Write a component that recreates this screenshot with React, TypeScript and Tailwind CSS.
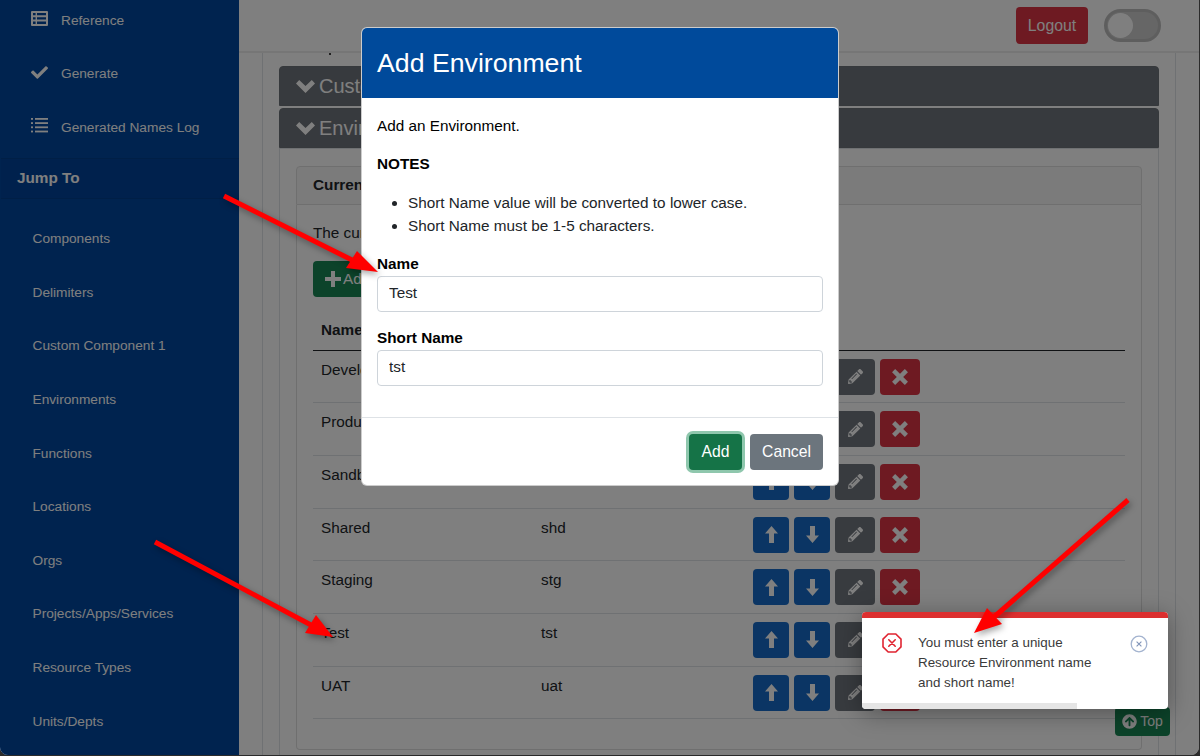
import React from "react";
import { FaCheck, FaPencilAlt, FaArrowCircleUp } from "react-icons/fa";

const jump = ["Components","Delimiters","Custom Component 1","Environments","Functions","Locations","Orgs","Projects/Apps/Services","Resource Types","Units/Depts"];
const rows: [string,string][] = [["Development","dev"],["Production","prd"],["Sandbox","sbx"],["Shared","shd"],["Staging","stg"],["Test","tst"],["UAT","uat"]];

function TableIcon() {
  return (
    <svg width="17" height="15" viewBox="0 0 17 15" fill="currentColor">
      <path fillRule="evenodd" d="M1 0H16A1 1 0 0 1 17 1V14A1 1 0 0 1 16 15H1A1 1 0 0 1 0 14V1A1 1 0 0 1 1 0ZM2 2V4.2H4.6V2ZM6 2V4.2H15V2ZM2 6.2V8.6H4.6V6.2ZM6 6.2V8.6H15V6.2ZM2 10.6V13H4.6V10.6ZM6 10.6V13H15V10.6Z" />
    </svg>
  );
}

function ListIcon() {
  return (
    <svg width="17" height="15" viewBox="0 0 17 15" fill="currentColor">
      <rect x="0" y="0" width="2" height="1.8" /><rect x="4" y="0" width="13" height="1.8" />
      <rect x="0" y="4.2" width="2" height="1.8" /><rect x="4" y="4.2" width="13" height="1.8" />
      <rect x="0" y="8.4" width="2" height="1.8" /><rect x="4" y="8.4" width="13" height="1.8" />
      <rect x="0" y="12.6" width="2" height="1.8" /><rect x="4" y="12.6" width="13" height="1.8" />
    </svg>
  );
}

function Chevron() {
  return (
    <svg width="19" height="14" viewBox="0 0 19 14" fill="currentColor">
      <polygon points="0,4.6 3.2,1 9.5,7 15.8,1 19,4.6 9.5,14" />
    </svg>
  );
}

function ArrowUp() {
  return (
    <svg width="13" height="17" viewBox="0 0 13 17" fill="currentColor">
      <polygon points="6.5,0 13,7.4 9,7.4 9,17 4,17 4,7.4 0,7.4" />
    </svg>
  );
}

function ArrowDown() {
  return (
    <svg width="13" height="17" viewBox="0 0 13 17" fill="currentColor">
      <polygon points="6.5,17 13,9.6 9,9.6 9,0 4,0 4,9.6 0,9.6" />
    </svg>
  );
}

function Cross() {
  return (
    <svg width="16" height="16" viewBox="0 0 16 16" fill="none" stroke="currentColor" strokeWidth="4.4">
      <path d="M1.6 1.6 14.4 14.4M14.4 1.6 1.6 14.4" />
    </svg>
  );
}

function Plus() {
  return (
    <svg width="16" height="16" viewBox="0 0 16 16" fill="currentColor">
      <polygon points="6,0 10,0 10,6 16,6 16,10 10,10 10,16 6,16 6,10 0,10 0,6 6,6" />
    </svg>
  );
}

function NavTop({ icon, label }: { icon: React.ReactNode; label: string }) {
  return (
    <div className="h-[53.6px] flex items-center pl-[31px] text-white text-[13.7px]">
      <span className="w-[30px] text-[17px] -mt-1 flex">{icon}</span>
      <span>{label}</span>
    </div>
  );
}

function Bar({ label, top }: { label: string; top?: boolean }) {
  return (
    <div className={`h-[40px] bg-[#6f757c] border border-[#6c7278] rounded-t-[4px] text-white text-[20px] flex items-center pl-[16px] gap-[4px] ${top ? "mb-[2px]" : ""}`}>
      <Chevron />
      <span>{label}</span>
    </div>
  );
}

export default function App() {
  return (
    <div className="w-[1200px] h-[756px] overflow-hidden bg-[#2b2b2b]">
      <div className="relative w-[1199px] h-[755px] overflow-hidden rounded-b-[8px] bg-white font-['Liberation_Sans',Arial,sans-serif] text-[#212529]">
        <div className="flex h-full">
          <aside className="w-[239px] shrink-0 bg-[#00469e] overflow-hidden">
            <div className="-mt-[6px]">
              <NavTop icon={<TableIcon />} label="Reference" />
              <NavTop icon={<FaCheck />} label="Generate" />
              <NavTop icon={<ListIcon />} label="Generated Names Log" />
            </div>
            <div className="mt-[3px] ml-[1px] h-[41px] bg-[#00439a] border-y border-[#003f8c] flex items-center pl-[16px] text-[15.3px] font-bold text-white">Jump To</div>
            <div className="mt-[14px]">
              {jump.map((j) => (
                <div key={j} className="h-[53.6px] flex items-center pl-[32.5px] text-[13.7px] text-white">{j}</div>
              ))}
            </div>
          </aside>
          <main className="flex-1 min-w-0 flex flex-col">
            <header className="h-[53px] shrink-0 border-b-2 border-[#ececec] flex items-center justify-end pr-[38px] gap-[16px]">
              <button className="w-[72px] h-[37px] rounded-[4px] bg-[#dc3545] text-white text-[15.8px] pt-[1px]">Logout</button>
              <span className="w-[57px] h-[33px] rounded-full bg-[#cccccc] border-[3px] border-[#bdbdbd] flex items-center pl-[1px]">
                <span className="w-[25px] h-[25px] rounded-full bg-white" />
              </span>
            </header>
            <div className="flex-1 min-h-0 ml-[23px] mr-[23px] border-x border-[#dee2e6] px-[16px] pt-[13px]">
              <Bar label="Custom Component 1" top />
              <Bar label="Environments" />
              <div className="h-[640px] border border-[#dee2e6] px-[16px] pt-[17px]">
                <div className="h-[39px] bg-[#f7f7f7] border border-[#dfdfdf] rounded-t-[4px] flex items-center pl-[16px] font-bold text-[15.3px]">Current Environments</div>
                <div className="h-[545px] border border-t-0 border-[#dfdfdf] rounded-b-[4px] px-[16px] pt-[17px] text-[15.3px]">
                  <p className="h-[39px]">The current Resource Environments.</p>
                  <button className="h-[36px] w-[80px] bg-[#198754] rounded-[4px] text-white flex items-center gap-[2px] pl-[12px]"><Plus />Add</button>
                  <table className="w-full mt-[15px] border-collapse text-[15.3px]">
                    <thead>
                      <tr className="border-b border-[#212529] h-[38px] text-left">
                        <th className="pl-[8px] w-[220px] font-bold">Name</th>
                        <th className="pl-[8px] w-[212px] font-bold">Short Name</th>
                        <th className="pl-[8px] font-bold">Actions</th>
                      </tr>
                    </thead>
                    <tbody>
                      {rows.map(([n, s]) => (
                        <tr key={n} className="border-b border-[#dee2e6] h-[52.7px] align-top">
                          <td className="pl-[8px] pt-[8px]">{n}</td>
                          <td className="pl-[8px] pt-[8px]">{s}</td>
                          <td className="pl-[8px] pt-[8px]">
                            <div className="flex gap-[5px]">
                              <span className="w-[36px] h-[36px] rounded-[4px] bg-[#166bc8] text-white flex items-center justify-center"><ArrowUp /></span>
                              <span className="w-[36px] h-[36px] rounded-[4px] bg-[#166bc8] text-white flex items-center justify-center"><ArrowDown /></span>
                              <span className="w-[40px] h-[36px] rounded-[4px] bg-[#70767e] text-white flex items-center justify-center"><FaPencilAlt className="text-[15px]" /></span>
                              <span className="w-[40px] h-[36px] rounded-[4px] bg-[#dc3545] text-white flex items-center justify-center"><Cross /></span>
                            </div>
                          </td>
                        </tr>
                      ))}
                    </tbody>
                  </table>
                </div>
              </div>
            </div>
          </main>
        </div>

        <span className="absolute left-[329px] top-[53px] w-[2px] h-[2px] rounded-full bg-black" />
        <button className="absolute left-[1115px] top-[707px] w-[55px] h-[29px] rounded-[4px] bg-[#198754] text-white text-[14px] flex items-center justify-center gap-[3px]"><FaArrowCircleUp className="text-[15px]" />Top</button>

        <div className="absolute inset-0 bg-black/50" />

        {/* Modal */}
        <div className="absolute left-[361px] top-[27px] w-[478px] h-[459px] bg-white rounded-[6px] border border-black/20 overflow-hidden flex flex-col text-[15.3px] text-black">
          <div className="h-[70px] shrink-0 bg-[#004a9b] text-white text-[26.7px] flex items-center pl-[15px]">Add Environment</div>
          <div className="px-[15px] pt-[18px] flex-1 min-h-0">
            <p className="h-[37px] leading-[20px]">Add an Environment.</p>
            <p className="font-bold h-[38px]">NOTES</p>
            <ul className="list-disc pl-[31px] leading-[23px] text-[#212529] h-[46px]">
              <li>Short Name value will be converted to lower case.</li>
              <li>Short Name must be 1-5 characters.</li>
            </ul>
            <label className="block font-bold mt-[17px] leading-[20px] mb-[2px]">Name</label>
            <input readOnly value="Test" className="block w-[446px] h-[36px] border border-[#ced4da] rounded-[4px] px-[11px] pb-[2px] text-[#212529] outline-none" />
            <label className="block font-bold mt-[16px] leading-[20px] mb-[2px]">Short Name</label>
            <input readOnly value="tst" className="block w-[446px] h-[36px] border border-[#ced4da] rounded-[4px] px-[11px] pb-[2px] text-[#212529] outline-none" />
          </div>
          <div className="h-[68px] shrink-0 border-t border-[#dee2e6] flex items-center justify-end pr-[15px] gap-[8px] pt-[1px] text-[15.7px]">
            <button className="w-[53px] h-[36px] rounded-[4px] bg-[#157347] text-white ring-[3px] ring-[#8fc7ad]">Add</button>
            <button className="w-[73px] h-[36px] rounded-[4px] bg-[#6c757d] text-white">Cancel</button>
          </div>
        </div>

        {/* Toast */}
        <div className="absolute left-[862px] top-[612px] w-[306px] h-[97px] bg-white rounded-[4px] overflow-hidden shadow-[0_4px_24px_rgba(0,0,0,0.35)] text-[#3a3a3a] text-[13.4px]">
          <div className="h-[6px] bg-[#dc2f2f]" />
          <div className="flex pl-[20px] pr-[20px] pt-[15px]">
            <svg width="20" height="20" viewBox="0 0 20 20" className="shrink-0">
              <polygon points="6.2,1 13.8,1 19,6.2 19,13.8 13.8,19 6.2,19 1,13.8 1,6.2" fill="none" stroke="#e02431" strokeWidth="1.6" />
              <path d="M6.8 6.8 13.2 13.2M13.2 6.8 6.8 13.2" stroke="#e02431" strokeWidth="1.6" strokeLinecap="round" />
            </svg>
            <p className="ml-[16px] w-[196px] leading-[20px]">You must enter a unique Resource Environment name and short name!</p>
            <svg width="18" height="18" viewBox="0 0 18 18" className="shrink-0 mt-[2px] ml-[16px]">
              <circle cx="9" cy="9" r="7.8" fill="none" stroke="#a3b3cf" strokeWidth="1.3" />
              <path d="M6.6 6.6 11.4 11.4M11.4 6.6 6.6 11.4" stroke="#7f93b8" strokeWidth="1.1" />
            </svg>
          </div>
          <div className="absolute left-0 bottom-0 h-[6px] w-[215px] bg-[#e5e5e5]" />
        </div>

        {/* Annotation arrows */}
        <svg className="absolute inset-0 pointer-events-none" width="1199" height="755" viewBox="0 0 1199 755" style={{ filter: "drop-shadow(2px 3px 3px rgba(0,0,0,0.35))" }}>
          <g fill="#ff0000">
            <path d="M224 196 L352 260" stroke="#ff0000" strokeWidth="5" />
            <polygon points="378,272 346,268 357,251" />
            <path d="M155 542 L311 625" stroke="#ff0000" strokeWidth="5" />
            <polygon points="333,637 305,633 316,615" />
            <path d="M1128 500 L994 617" stroke="#ff0000" strokeWidth="5" />
            <polygon points="974,633 1002,624 987,608" />
          </g>
        </svg>
      </div>
    </div>
  );
}
